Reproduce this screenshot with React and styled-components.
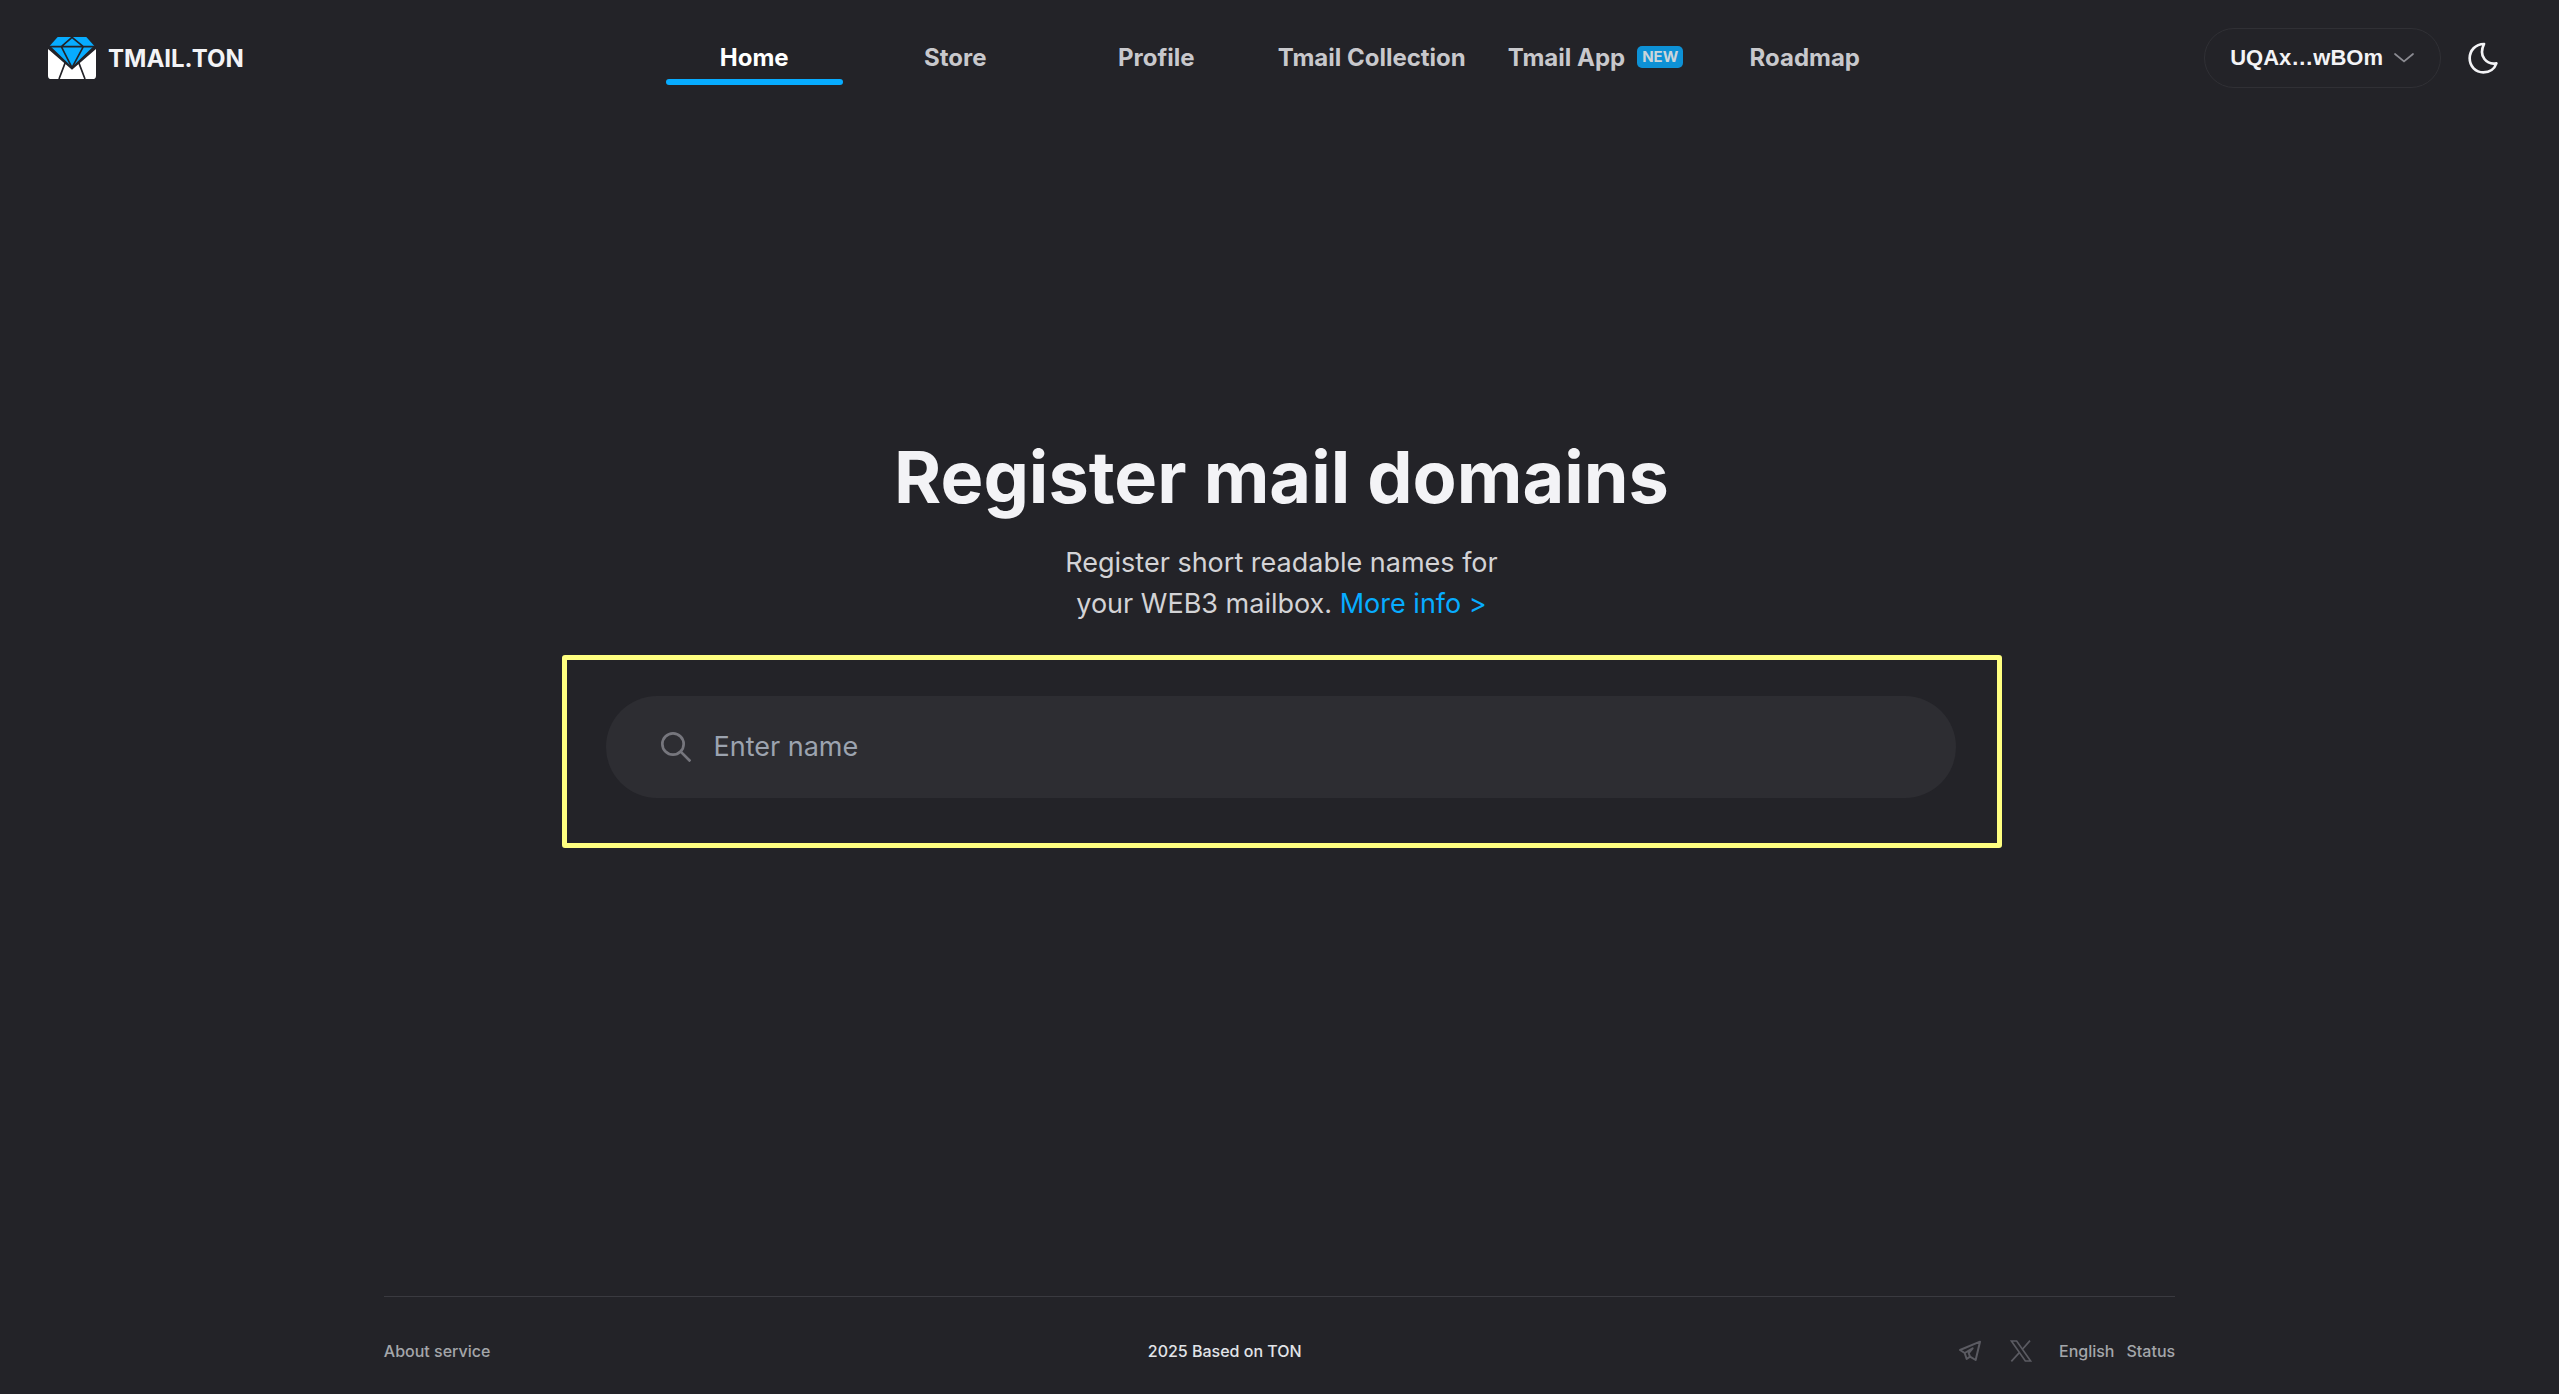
import React, { useState } from "react";
import styled, { createGlobalStyle } from "styled-components";

const navItems = [
  { name: "Home", active: true },
  { name: "Store" },
  { name: "Profile" },
  { name: "Tmail Collection" },
  { name: "Tmail App", badge: "NEW" },
  { name: "Roadmap" },
];

function Logo() {
  return (
    <svg width="48" height="42" viewBox="0 0 144 126" aria-hidden="true">
      <path
        d="M0 36L72 98L144 36V116Q144 126 134 126H10Q0 126 0 116Z"
        fill="#fff"
      />
      <path d="M52 76L33 126M92 76L111 126" stroke="#232328" strokeWidth="5" />
      <path
        d="M31 0H113L140 28L72 93L4 28Z"
        fill="#07acff"
        stroke="#232328"
        strokeWidth="5"
        strokeLinejoin="round"
      />
      <path d="M29 0H115L139 27H5Z" fill="#07acff" />
      <path
        d="M3 29H141M40 29L72 1L106 29L72 92Z"
        fill="none"
        stroke="#232328"
        strokeWidth="5"
        strokeLinejoin="round"
      />
    </svg>
  );
}

function Chevron() {
  return (
    <svg width="20" height="10" viewBox="0 0 20 10" aria-hidden="true">
      <path
        d="M1 1L10 8.5L19 1"
        fill="none"
        stroke="#8b8b92"
        strokeWidth="1.7"
        strokeLinecap="round"
      />
    </svg>
  );
}

function Moon() {
  return (
    <svg width="30" height="32" viewBox="0 0 90 96" aria-hidden="true">
      <path
        d="M48 6C22 6 5 26 5 49C5 73 23 91 46 91C65 91 80 80 85 64C57 69 30 44 48 6Z"
        fill="none"
        stroke="#f3f3f6"
        strokeWidth="8"
        strokeLinejoin="round"
      />
    </svg>
  );
}

function SearchIcon() {
  return (
    <svg width="30" height="30" viewBox="0 0 90 90" aria-hidden="true">
      <circle cx="36" cy="36" r="32" fill="none" stroke="#76767d" strokeWidth="8" />
      <path d="M59 59L88 88" stroke="#76767d" strokeWidth="8" />
    </svg>
  );
}

function Telegram() {
  return (
    <svg width="22" height="22" viewBox="0 0 66 66" aria-hidden="true">
      <path
        d="M3 30L63 5L50 60L33 50L23 57L17 39ZM17 39L41 25L29 39L33 50"
        fill="none"
        stroke="#5b5b62"
        strokeWidth="6"
        strokeLinejoin="round"
      />
    </svg>
  );
}

function XLogo() {
  return (
    <svg width="22" height="22" viewBox="0 0 66 66" aria-hidden="true">
      <path
        d="M4 3H20L62 63H46ZM60 2L38 27M28 38L4 64"
        fill="none"
        stroke="#5b5b62"
        strokeWidth="5"
      />
    </svg>
  );
}

function App() {
  const [name, setName] = useState("");

  return (
    <Page>
      <GlobalStyle />
      <Header>
        <Brand href="#">
          <Logo />
          TMAIL.TON
        </Brand>
        <Nav>
          {navItems.map((item) => (
            <NavLink key={item.name} href="#" $active={item.active}>
              {item.name}
              {item.badge && <Badge>{item.badge}</Badge>}
            </NavLink>
          ))}
        </Nav>
        <Actions>
          <WalletButton type="button">
            UQAx…wBOm
            <Chevron />
          </WalletButton>
          <ThemeButton type="button" aria-label="Toggle theme">
            <Moon />
          </ThemeButton>
        </Actions>
      </Header>

      <Main>
        <Title>Register mail domains</Title>
        <Subtitle>
          Register short readable names for
          <br />
          your WEB3 mailbox. <a href="#">More info &gt;</a>
        </Subtitle>
        <SearchFrame>
          <SearchBar>
            <SearchIcon />
            <SearchInput
              type="text"
              aria-label="Enter name"
              placeholder="Enter name"
              value={name}
              onChange={(e) => setName(e.target.value)}
            />
          </SearchBar>
        </SearchFrame>
      </Main>

      <Footer>
        <FooterLink href="#">About service</FooterLink>
        <Copyright>2025 Based on TON</Copyright>
        <FooterLinks>
          <Socials>
            <SocialLink href="#" aria-label="Telegram">
              <Telegram />
            </SocialLink>
            <SocialLink href="#" aria-label="X">
              <XLogo />
            </SocialLink>
          </Socials>
          <FooterLink href="#">English</FooterLink>
          <FooterLink href="#">Status</FooterLink>
        </FooterLinks>
      </Footer>
    </Page>
  );
}

const GlobalStyle = createGlobalStyle`
  * {
    box-sizing: border-box;
  }
  body {
    margin: 0;
    background: #232328;
    color: #f3f3f6;
    font-family: Inter, "Liberation Sans", sans-serif;
  }
  a {
    text-decoration: none;
  }
`;

const Page = styled.div`
  display: flex;
  flex-direction: column;
  min-height: 100vh;
`;

const Header = styled.header`
  display: grid;
  grid-template-columns: 1fr auto 1fr;
  align-items: center;
  padding: 28px 48px;
`;

const Brand = styled.a`
  display: flex;
  align-items: center;
  gap: 12px;
  color: #f3f3f6;
  font-size: 24px;
  font-weight: 700;
`;

const Nav = styled.nav`
  display: flex;
  gap: 24px;
`;

const NavLink = styled.a`
  display: flex;
  align-items: center;
  justify-content: center;
  min-width: 177px;
  height: 60px;
  padding: 0 9px 2px;
  color: ${(props) => (props.$active ? "#ffffff" : "#c8c8cc")};
  font-size: 24px;
  font-weight: 700;
  white-space: nowrap;
  position: relative;

  &::after {
    content: "";
    display: ${(props) => (props.$active ? "block" : "none")};
    position: absolute;
    left: 0;
    right: 0;
    bottom: 3px;
    height: 6px;
    border-radius: 3px;
    background: #07acff;
  }
`;

const Badge = styled.span`
  margin-left: 12px;
  padding: 0 5px;
  border-radius: 5px;
  background: #0d91d6;
  color: #cbd5da;
  font-size: 15px;
  line-height: 22px;
  font-weight: 700;
`;

const Actions = styled.div`
  display: flex;
  align-items: center;
  justify-content: flex-end;
  gap: 14px;
`;

const WalletButton = styled.button`
  display: flex;
  align-items: center;
  gap: 11px;
  height: 60px;
  padding: 0 26px 0 25px;
  border: 1px solid #303035;
  border-radius: 30px;
  background: transparent;
  color: #f3f3f6;
  font-family: "Liberation Sans", Arial, sans-serif;
  font-size: 22px;
  font-weight: 700;
`;

const ThemeButton = styled.button`
  display: flex;
  align-items: center;
  justify-content: center;
  width: 56px;
  height: 56px;
  padding: 0;
  border: 0;
  background: transparent;
`;

const Main = styled.main`
  flex: 1;
  display: flex;
  flex-direction: column;
  align-items: center;
  padding: 317px 0 60px 4px;
`;

const Title = styled.h1`
  margin: 0;
  font-size: 72px;
  line-height: 88px;
  font-weight: 700;
`;

const Subtitle = styled.p`
  margin: 21px 0 0;
  color: #d3d3d6;
  font-size: 27px;
  line-height: 41px;
  text-align: center;

  a {
    color: #07acff;
  }
`;

const SearchFrame = styled.div`
  width: 100%;
  max-width: 1440px;
  margin-top: 31px;
  padding: 36px 41px 45px 39px;
  border: 5px solid #ffff80;
  border-radius: 3px;
`;

const SearchBar = styled.div`
  display: flex;
  align-items: center;
  gap: 23px;
  height: 102px;
  padding: 0 55px;
  border-radius: 51px;
  background: #2d2d32;
`;

const SearchInput = styled.input`
  flex: 1;
  min-width: 0;
  padding: 0;
  border: 0;
  outline: 0;
  background: transparent;
  color: #f3f3f6;
  font-family: inherit;
  font-size: 27px;
  line-height: 40px;

  &::placeholder {
    color: #9ca3af;
    opacity: 1;
  }
`;

const Footer = styled.footer`
  display: flex;
  align-items: center;
  justify-content: space-between;
  width: 70%;
  margin: 0 auto;
  padding: 42px 0 31px;
  border-top: 1px solid #3a3a40;
  font-size: 16px;
  line-height: 24px;
  font-weight: 500;
`;

const FooterLink = styled.a`
  color: #a3a6aa;
`;

const Copyright = styled.span`
  color: #e1e4e8;
`;

const FooterLinks = styled.div`
  display: flex;
  align-items: center;
  gap: 12px;
`;

const Socials = styled.div`
  display: flex;
  gap: 29px;
  margin-right: 15px;
`;

const SocialLink = styled.a`
  display: flex;
`;

export default App;
